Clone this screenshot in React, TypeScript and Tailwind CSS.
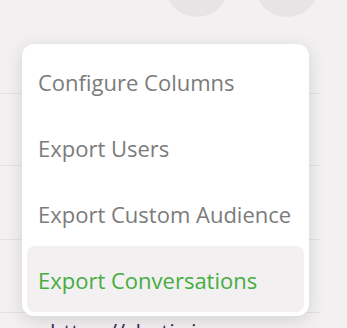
import React from "react";

export default function App() {
  const items = [
    { label: "Configure Columns", active: false },
    { label: "Export Users", active: false },
    { label: "Export Custom Audience", active: false },
    { label: "Export Conversations", active: true },
  ];
  return (
    <div
      className="relative w-[347px] h-[328px] overflow-hidden bg-[#f2f0f1]"
      style={{ fontFamily: '"Open Sans", "Noto Sans", sans-serif' }}
    >
      <div className="w-[320px] flex flex-col">
        <div className="h-[94px] flex flex-col border-b border-[#e4e1e2]">
          <div className="flex -mt-[47px] pl-[165px] gap-[26px]">
            <div className="w-[64px] h-[64px] rounded-full bg-[#e6e4e5]" />
            <div className="w-[64px] h-[64px] rounded-full bg-[#e6e4e5]" />
          </div>
        </div>
        <div className="h-[72px] border-b border-[#e4e1e2]" />
        <div className="h-[74px] border-b border-[#e4e1e2]" />
        <div className="h-[73px] border-b border-[#e4e1e2]" />
        <div className="pl-[50px] pt-[3px] text-[22px] leading-[30px] text-[#3b2d5c] whitespace-nowrap">
          https://chatic.io
        </div>
      </div>

      <div className="absolute left-[22px] top-[44px] w-[287px] rounded-[12px] bg-white px-[5px] py-[4px] shadow-[0_4px_18px_rgba(0,0,0,0.13)]">
        {items.map((it) => (
          <div
            key={it.label}
            className={
              it.active
                ? "h-[66px] flex items-center px-[11px] rounded-[8px] bg-[#f2f0f1] text-[22px] text-[#46ad3f] whitespace-nowrap"
                : "h-[66px] flex items-center px-[11px] rounded-[8px] text-[22px] text-[#7b7b7b] whitespace-nowrap"
            }
          >
            <span className="pt-[2px] leading-[30px]">{it.label}</span>
          </div>
        ))}
      </div>
    </div>
  );
}
